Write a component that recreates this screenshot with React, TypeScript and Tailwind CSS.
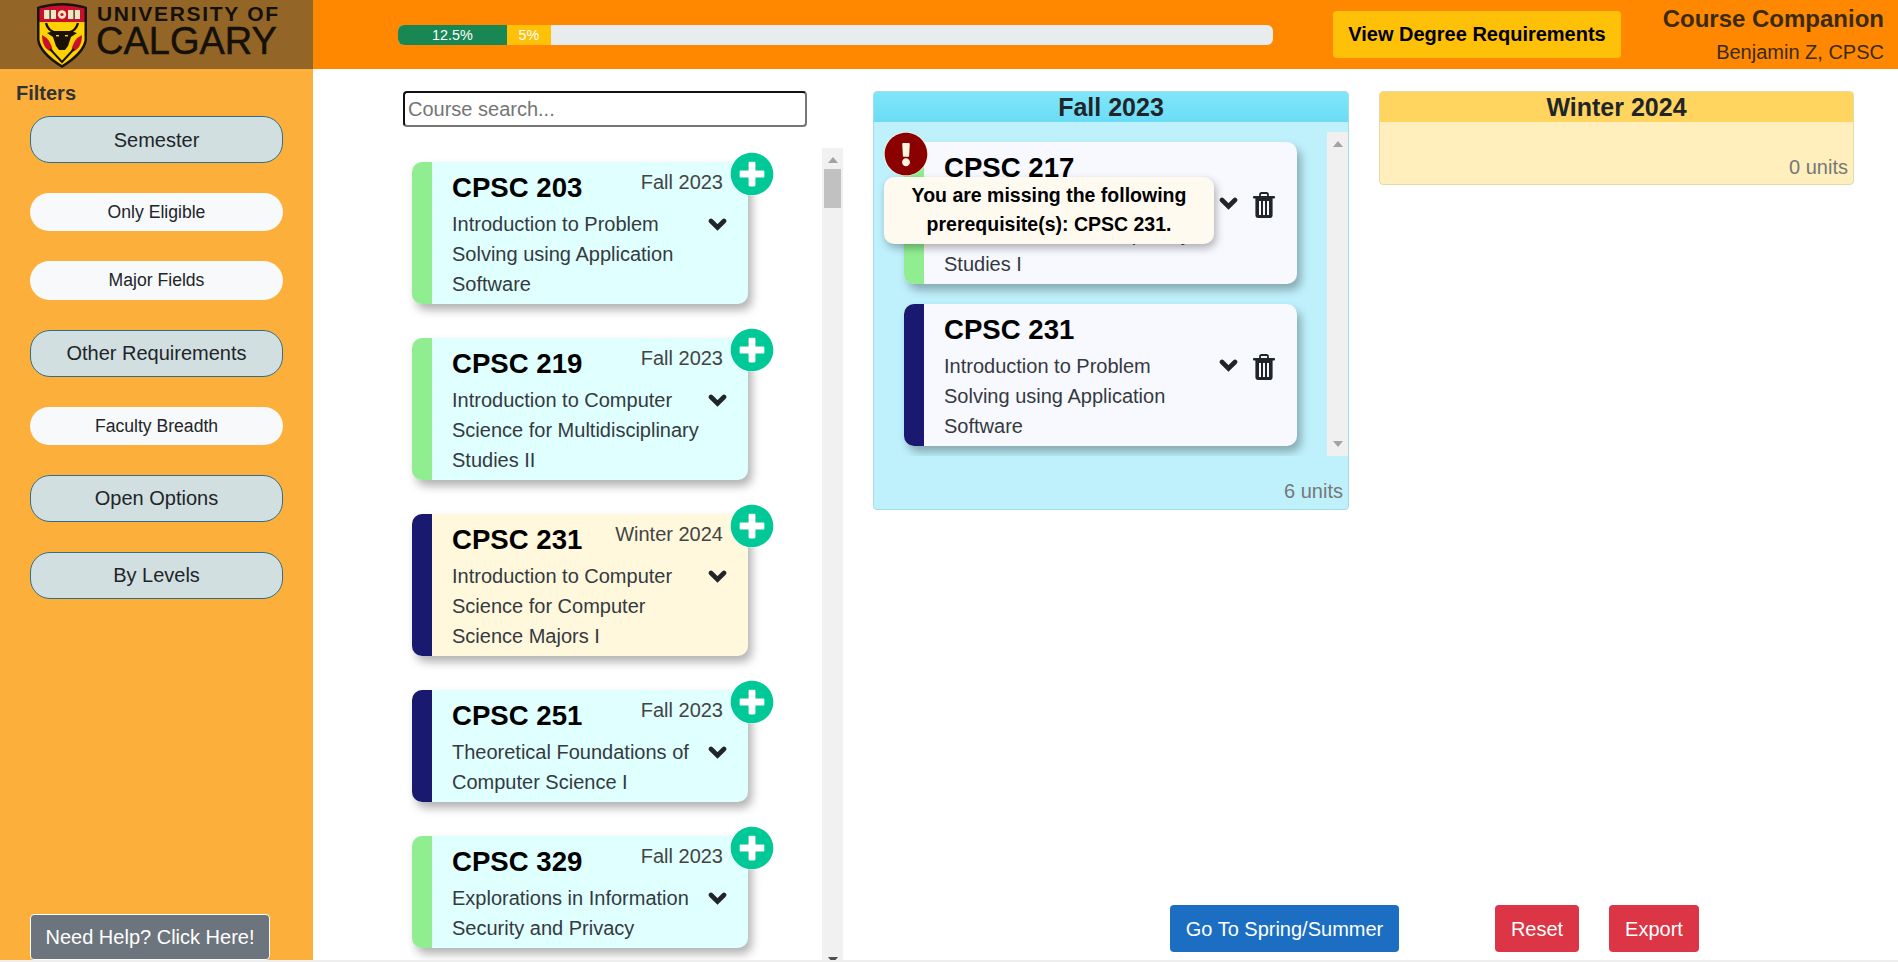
import { FaExclamationCircle, FaPlusCircle } from "react-icons/fa";

type Course = {
  code: string;
  title: string;
  term: string;
  strip: string;
  bg: string;
};

const COURSES: Course[] = [
  { code: "CPSC 203", title: "Introduction to Problem Solving using Application Software", term: "Fall 2023", strip: "bg-[#90ee90]", bg: "bg-[#e0ffff]" },
  { code: "CPSC 219", title: "Introduction to Computer Science for Multidisciplinary Studies II", term: "Fall 2023", strip: "bg-[#90ee90]", bg: "bg-[#e0ffff]" },
  { code: "CPSC 231", title: "Introduction to Computer Science for Computer Science Majors I", term: "Winter 2024", strip: "bg-[#191970]", bg: "bg-[#fff8dc]" },
  { code: "CPSC 251", title: "Theoretical Foundations of Computer Science I", term: "Fall 2023", strip: "bg-[#191970]", bg: "bg-[#e0ffff]" },
  { code: "CPSC 329", title: "Explorations in Information Security and Privacy", term: "Fall 2023", strip: "bg-[#90ee90]", bg: "bg-[#e0ffff]" },
];

const FILTERS = [
  { label: "Semester", open: true, h: "h-[47px]" },
  { label: "Only Eligible", open: false, h: "h-[38px]" },
  { label: "Major Fields", open: false, h: "h-[39px]" },
  { label: "Other Requirements", open: true, h: "h-[47px] pb-[2px]" },
  { label: "Faculty Breadth", open: false, h: "h-[38px]" },
  { label: "Open Options", open: true, h: "h-[47px] pb-[2px]" },
  { label: "By Levels", open: true, h: "h-[47px] pb-[2px]" },
];

function Shield() {
  return (
    <svg width="52" height="66" viewBox="0 0 52 66" className="shrink-0">
      <path d="M1 5 Q26 -3 51 5 V38 Q49 52 26 66 Q3 52 1 38 Z" fill="#1a1206" />
      <path d="M3.5 6.5 Q26 0.5 48.5 6.5 V20 H3.5 Z" fill="#c8102e" />
      <path d="M3.5 20 H48.5 V38 Q46.5 50 26 63 Q5.5 50 3.5 38 Z" fill="#ffd200" />
      {/* books and rosette */}
      <rect x="8" y="8" width="12" height="9" fill="#f4e6c0" />
      <rect x="13.5" y="8" width="1.2" height="9" fill="#1a1206" />
      <rect x="32" y="8" width="12" height="9" fill="#f4e6c0" />
      <rect x="37.5" y="8" width="1.2" height="9" fill="#1a1206" />
      <circle cx="26" cy="12.5" r="4.2" fill="#f4e6c0" />
      <circle cx="26" cy="12.5" r="1.6" fill="#c8102e" />
      {/* horns */}
      <path d="M10 21 Q12 29 20 31" fill="none" stroke="#1a1206" strokeWidth="2.4" />
      <path d="M42 21 Q40 29 32 31" fill="none" stroke="#1a1206" strokeWidth="2.4" />
      {/* bull */}
      <path d="M11 31 L18 29 H34 L41 31 L35 35 L32 44 L29 48 H23 L20 44 L17 35 Z" fill="#1a1206" />
      <rect x="20" y="33" width="3" height="1.4" fill="#ffd200" />
      <rect x="29" y="33" width="3" height="1.4" fill="#ffd200" />
      {/* flanks */}
      <path d="M6 33 Q15 37 17 50 Q12 49 9 45 Q6 40 6 33 Z" fill="#c8102e" />
      <path d="M46 33 Q37 37 35 50 Q40 49 43 45 Q46 40 46 33 Z" fill="#c8102e" />
      <path d="M14 47 L26 60 L38 47" fill="none" stroke="#1a1206" strokeWidth="2" />
    </svg>
  );
}

function Arrow({ up, color }: { up?: boolean; color: string }) {
  return (
    <svg width="10" height="6" viewBox="0 0 10 6" className="shrink-0" fill={color}>
      <polygon points={up ? "5,0 10,6 0,6" : "0,0 10,0 5,6"} />
    </svg>
  );
}

function Chevron({ className }: { className: string }) {
  return (
    <svg width="19" height="13" viewBox="0 0 19 13" className={`shrink-0 text-[#212529] ${className}`}>
      <polyline points="3,3 9.5,9.5 16,3" fill="none" stroke="currentColor" strokeWidth="4.6" strokeLinecap="round" strokeLinejoin="miter" />
    </svg>
  );
}

function Trash({ className }: { className: string }) {
  return (
    <svg width="22" height="26" viewBox="0 0 22 26" className={`shrink-0 text-[#212529] ${className}`}>
      <path d="M7 4.5 V2.6 Q7 1 8.6 1 H13.4 Q15 1 15 2.6 V4.5" fill="none" stroke="currentColor" strokeWidth="1.8" />
      <rect x="0" y="4" width="22" height="2.6" rx="1" fill="currentColor" />
      <path
        fillRule="evenodd"
        fill="currentColor"
        d="M2.4 6 H19.6 V23 Q19.6 26 16.8 26 H5.2 Q2.4 26 2.4 23 Z M6 9 V23 H8 V9 Z M10 9 V23 H12 V9 Z M14 9 V23 H16 V9 Z"
      />
    </svg>
  );
}

function CourseHead({ code, term }: { code: string; term?: string }) {
  return (
    <div className="flex h-[47px] justify-between pr-[25px]">
      <span className="mt-[8px] text-[27.6px] leading-[36px] font-bold text-black">{code}</span>
      {term && <span className="mt-[8px] text-[20px] leading-[24px] text-[#444]">{term}</span>}
    </div>
  );
}

function CatalogCard({ course }: { course: Course }) {
  return (
    <div className={`relative flex w-[336px] shrink-0 rounded-[10px] shadow-[4px_6px_10px_rgba(0,0,0,0.3)] ${course.bg}`}>
      <div className={`w-[20px] shrink-0 rounded-l-[10px] ${course.strip}`} />
      <div className="flex-1 pb-[5px] pl-[20px]">
        <CourseHead code={course.code} term={course.term} />
        <div className="flex justify-between pr-[21px]">
          <p className="w-[250px] text-[20px] leading-[30px] text-[#343a40]">{course.title}</p>
          <Chevron className="mt-[9px]" />
        </div>
      </div>
      <div className="absolute -top-[10px] -right-[26px] rounded-full bg-white">
        <FaPlusCircle className="text-[44px] text-[#00c897]" />
      </div>
    </div>
  );
}

function PlannedCard({ code, title, strip, warning }: { code: string; title: string; strip: string; warning?: string }) {
  return (
    <div className="relative flex w-[393px] shrink-0 rounded-[10px] bg-[#f8f8ff] shadow-[4px_6px_10px_rgba(0,0,0,0.3)]">
      <div className={`w-[20px] shrink-0 rounded-l-[10px] ${strip}`} />
      <div className="flex-1 pb-[5px] pl-[20px]">
        <CourseHead code={code} />
        <div className="flex justify-between pr-[22px]">
          <p className="w-[250px] text-[20px] leading-[30px] text-[#343a40]">{title}</p>
          <div className="flex items-start gap-[15px]">
            <Chevron className="mt-[8px]" />
            <Trash className="mt-[3px]" />
          </div>
        </div>
      </div>
      {warning && (
        <>
          <div className="absolute -top-[10px] -left-[20px] z-10 rounded-full bg-[#fff6e0]">
            <FaExclamationCircle className="text-[44px] text-[#8b0000]" />
          </div>
          <div className="absolute top-[35px] -left-[20px] z-10 w-[330px] rounded-[10px] bg-[#fffaf0] px-[10px] pt-[4px] pb-[5px] text-center text-[19.5px] leading-[29px] font-bold text-black shadow-[2px_4px_8px_rgba(0,0,0,0.3)]">
            {warning}
          </div>
        </>
      )}
    </div>
  );
}

export default function App() {
  return (
    <div className="flex h-screen w-full flex-col overflow-hidden bg-white font-['Liberation_Sans',Arial,sans-serif] text-[#212529]">
      <header className="flex h-[69px] shrink-0 items-center bg-[#ff8800]">
        <div className="flex h-full w-[313px] shrink-0 items-center gap-[9px] bg-[#936627] pl-[36px]">
          <Shield />
          <div className="flex flex-col self-start pt-[4px] text-[#14100a]">
            <span className="text-[21px] leading-[19px] font-bold tracking-[1.7px] whitespace-nowrap">UNIVERSITY OF</span>
            <span className="-ml-[1px] text-[38px] leading-[36px] whitespace-nowrap [-webkit-text-stroke:0.5px_#14100a]">CALGARY</span>
          </div>
        </div>
        <div className="ml-[85px] flex h-[20px] w-[875px] shrink-0 overflow-hidden rounded-[6px] bg-[#e9ecef] text-center text-[14.4px] leading-[20px] text-white">
          <div className="w-[109px] bg-[#198754]">12.5%</div>
          <div className="w-[44px] bg-[#ffc107]">5%</div>
        </div>
        <button className="ml-[60px] h-[47px] w-[288px] shrink-0 rounded-[4px] bg-[#ffc107] pb-[2px] text-[20px] font-bold text-black">
          View Degree Requirements
        </button>
        <div className="ml-auto flex flex-col items-end pr-[14px]">
          <span className="text-[24px] leading-[34px] font-bold text-[#3a2a10]">Course Companion</span>
          <span className="text-[20px] leading-[32px] text-[#3a2a10]">Benjamin Z, CPSC</span>
        </div>
      </header>

      <div className="flex min-h-0 flex-1">
        <aside className="flex w-[313px] shrink-0 flex-col bg-[#fdaf3b] pl-[30px]">
          <div className="-ml-[14px] h-[47px] pt-[1px] text-[20px] leading-[47px] font-bold text-[#333]">Filters</div>
          <div className="flex flex-col gap-[30px]">
            {FILTERS.map((f) =>
              f.open ? (
                <button key={f.label} className={`w-[253px] rounded-[20px] border border-[#2f6f8a] bg-[#d2dfe0] text-[20px] text-[#212529] ${f.h}`}>
                  {f.label}
                </button>
              ) : (
                <button key={f.label} className={`w-[253px] rounded-full bg-[#f8f9fa] text-[17.6px] text-[#212529] ${f.h}`}>
                  {f.label}
                </button>
              ),
            )}
          </div>
          <button className="mt-auto h-[46px] w-[240px] rounded-[4px] border border-white bg-[#6c757d] text-[20px] text-white">
            Need Help? Click Here!
          </button>
        </aside>

        <section className="flex w-[530px] shrink-0 flex-col pl-[90px]">
          <input
            placeholder="Course search..."
            className="mt-[22px] h-[36px] w-[404px] rounded-[4px] border-2 border-t-[#111] border-r-[#767676] border-b-[#767676] border-l-[#111] pl-[3px] text-[20px] outline-none placeholder:text-[#757575]"
          />
          <div className="mt-[21px] flex min-h-0 flex-1">
            <div className="flex w-[419px] shrink-0 flex-col gap-[34px] overflow-hidden pt-[14px] pl-[9px]">
              {COURSES.map((c) => (
                <CatalogCard key={c.code} course={c} />
              ))}
            </div>
            <div className="flex w-[21px] shrink-0 flex-col items-center bg-[#f1f1f1]">
              <div className="mt-[9px] mb-[6px]">
                <Arrow up color="#a3a3a3" />
              </div>
              <div className="h-[39px] w-[17px] bg-[#c1c1c1]" />
              <div className="mt-auto -mb-[3px]">
                <Arrow color="#505050" />
              </div>
            </div>
          </div>
        </section>

        <section className="flex min-w-0 flex-1 flex-col pt-[22px] pl-[30px]">
          <div className="flex items-start gap-[30px]">
            <div className="w-[476px] shrink-0 overflow-hidden rounded-[4px] border border-[#a4dbe6] bg-[#bff1fd]">
              <div className="h-[30px] bg-linear-to-b from-[#80e6f9] to-[#6bdcf6] text-center text-[25px] leading-[30px] font-bold">Fall 2023</div>
              <div className="mt-[10px] flex h-[324px]">
                <div className="flex flex-1 flex-col gap-[20px] overflow-hidden pt-[10px] pl-[30px]">
                  <PlannedCard
                    code="CPSC 217"
                    title="Introduction to Computer Science for Multidisciplinary Studies I"
                    strip="bg-[#90ee90]"
                    warning="You are missing the following prerequisite(s): CPSC 231."
                  />
                  <PlannedCard
                    code="CPSC 231"
                    title="Introduction to Problem Solving using Application Software"
                    strip="bg-[#191970]"
                  />
                </div>
                <div className="flex w-[21px] shrink-0 flex-col items-center justify-between bg-[#f0f0f0] py-[9px]">
                  <Arrow up color="#a3a3a3" />
                  <Arrow color="#a3a3a3" />
                </div>
              </div>
              <div className="h-[53px] pt-[23px] pr-[5px] text-right text-[20px] leading-[24px] text-[#777]">6 units</div>
            </div>

            <div className="w-[475px] shrink-0 overflow-hidden rounded-[4px] border border-[#e6d9a8] bg-[#ffefbd]">
              <div className="h-[30px] bg-[#ffd55f] text-center text-[25px] leading-[30px] font-bold">Winter 2024</div>
              <div className="h-[62px] pt-[33px] pr-[5px] text-right text-[20px] leading-[24px] text-[#777]">0 units</div>
            </div>
          </div>

          <div className="mt-auto mb-[8px] flex pl-[297px] text-[20px] text-white">
            <button className="h-[47px] w-[229px] rounded-[4px] bg-[#1b6ec2]">Go To Spring/Summer</button>
            <button className="ml-[96px] h-[47px] w-[84px] rounded-[4px] bg-[#dc3545]">Reset</button>
            <button className="ml-[30px] h-[47px] w-[90px] rounded-[4px] bg-[#dc3545]">Export</button>
          </div>
        </section>
      </div>

      <div className="h-[2px] shrink-0 bg-[#eeeeee]" />
    </div>
  );
}
